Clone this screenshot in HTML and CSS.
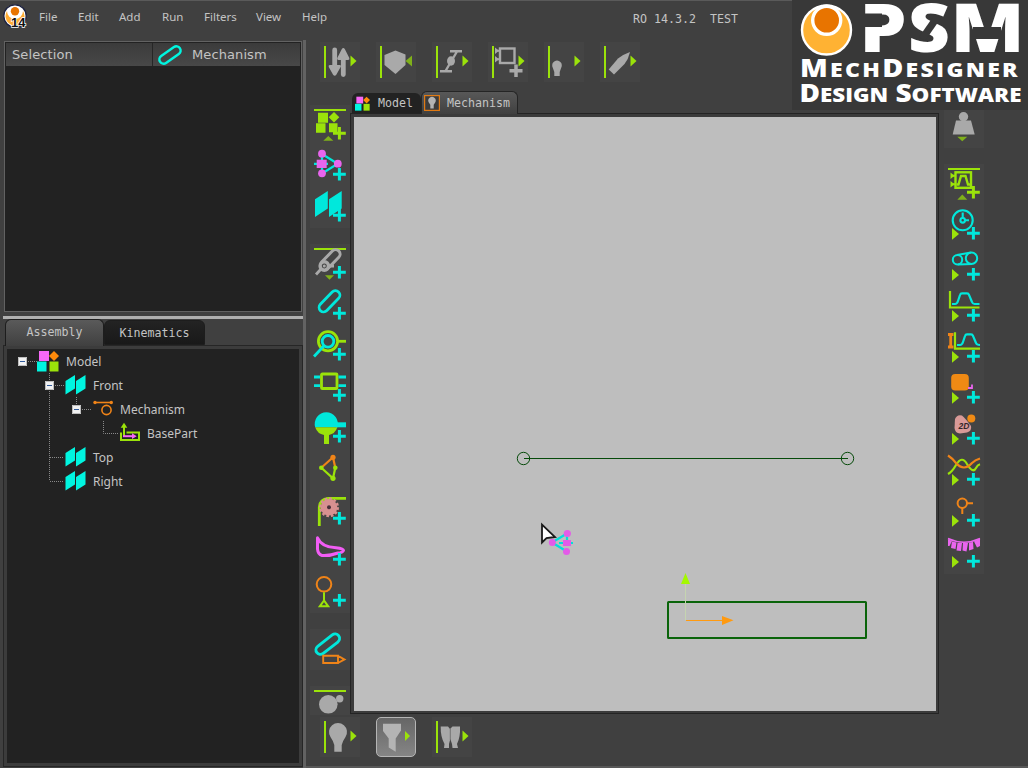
FILE: index.html
```html
<!DOCTYPE html>
<html lang="en">
<head>
<meta charset="utf-8">
<title>MechDesigner</title>
<link rel="stylesheet" href="styles.css">
</head>
<body>
<svg class="defs" width="0" height="0">
  <symbol id="plus" viewBox="0 0 40 40"><path d="M29.4 22V34.6M23 28.3H35.8" fill="none" stroke="currentColor" stroke-width="3"/></symbol>
  <symbol id="bar" viewBox="0 0 40 40"><path d="M4 4h2v32h-2z" fill="#9be30a"/></symbol>
  <symbol id="topline" viewBox="0 0 40 40"><path d="M4 4h32v2h-32z" fill="#9be30a"/></symbol>
  <symbol id="more" viewBox="0 0 40 40"><path d="M30.5 13.6V24.4L36.5 19z" fill="#9be30a"/></symbol>
  <symbol id="play" viewBox="0 0 40 40"><path d="M8 23V34.8L15 29z" fill="#9be30a"/></symbol>
  <symbol id="planes" viewBox="0 0 22 22"><path d="M1.500 7 11 1V14.500L1.500 20.500zM12 7 21.500 1V14.500L12 20.500z" fill="#00f5e0"/></symbol>
  <symbol id="blocks" viewBox="0 0 22 22"><path d="M2 1h10v10H2z" fill="#f768f7"/><path d="M17 1l5 5-5 5-5-5z" fill="#ff8a0a"/><path d="M0 11.5h9.5v10H0z" fill="#00f5e0"/><path d="M12.5 11.5h9v10h-9z" fill="#9be30a"/></symbol>
  <symbol id="minus" viewBox="0 0 9 9"><path d="M0 0h9v9H0z" fill="#f2f2f2"/><path d="M.5 .5h8v8h-8z" fill="none" stroke="#bdbdbd"/><path d="M2 4h5v1H2z" fill="#315b9c"/></symbol>
</svg>
<div class="app">
  <header class="menubar">
    <svg class="app-icon" viewBox="0 0 24 26"><circle cx="12" cy="12" r="11.2" fill="#fff" stroke="#1c2140" stroke-width="1.3"/><path d="M4 7a9.5 9.5 0 1 0 16 0a8 8 0 0 1-16 0" fill="#ffad33"/><circle cx="12" cy="7.2" r="4.2" fill="#e87400"/><text x="8" y="22.5" class="badge-num">14</text></svg>
    <nav class="menus"><span>File</span><span>Edit</span><span>Add</span><span>Run</span><span>Filters</span><span>View</span><span>Help</span></nav>
    <div class="version">RO 14.3.2&nbsp; TEST</div>
  </header>

  <aside class="side">
    <section class="selection">
      <div class="sel-head">
        <div class="sel-cell first">Selection</div>
        <div class="sel-cell"><svg class="sel-icon" viewBox="0 0 24 20"><rect x="0" y="5.800" width="24" height="8.400" rx="4.200" transform="rotate(-35 12 10)" fill="none" stroke="#00f5e0" stroke-width="2.500"/></svg><span>Mechanism</span></div>
      </div>
    </section>
    <div class="hsplit"></div>
    <div class="side-tabs"><div class="tab on">Assembly</div><div class="tab">Kinematics</div></div>
    <section class="tree-frame">
      <div class="tree">
        <svg class="wires" viewBox="7 349 140 150"><path d="M28 361.500H37M49.500 373V481M55 385.500H64M76.500 397V404M82 409.500H91M103.500 421V433.500H118M50 457.500H64M50 481.500H64" fill="none" stroke="#8a8a8a" stroke-dasharray="1 1"/></svg>
        <div class="row"><svg class="box"><use href="#minus"/></svg><svg class="ico"><use href="#blocks"/></svg><span>Model</span></div>
        <div class="row l1"><svg class="box"><use href="#minus"/></svg><svg class="ico"><use href="#planes"/></svg><span>Front</span></div>
        <div class="row l2"><svg class="box"><use href="#minus"/></svg><svg class="ico" viewBox="0 0 22 22"><g fill="none" stroke="#f08418" stroke-width="1.600"><path d="M4 4.500H20"/><circle cx="15.500" cy="12" r="4.600"/></g><circle cx="4" cy="4.500" r="1.700" fill="#f08418"/><circle cx="20.300" cy="4.500" r="1.700" fill="#f08418"/></svg><span>Mechanism</span></div>
        <div class="row l3"><i class="box"></i><svg class="ico" viewBox="0 0 22 22"><path d="M8.500 10.500H21V18H3V10.500" fill="none" stroke="#9be30a" stroke-width="2"/><path d="M6 14V4" stroke="#9be30a" stroke-width="2"/><path d="M2.700 5.800 6 .8 9.300 5.800z" fill="#9be30a"/><path d="M5 14.200H15" stroke="#f768f7" stroke-width="2"/><path d="M14 11.300 18.700 14.200 14 17.100z" fill="#f768f7"/></svg><span>BasePart</span></div>
        <div class="row l1"><i class="box"></i><svg class="ico"><use href="#planes"/></svg><span>Top</span></div>
        <div class="row l1"><i class="box"></i><svg class="ico"><use href="#planes"/></svg><span>Right</span></div>
      </div>
    </section>
  </aside>
  <div class="vsplit"></div>

  <main class="work">
    <div class="toolbar top">
      <svg class="btn"><use href="#bar"/><g fill="#a9a9a9"><path d="M12.300 8a2.400 2.400 0 0 1 4.800 0V23h2.600q2 .4 .8 2.200l-4.200 7.600q-1.600 2-3.200 0l-4.200-7.600q-1-1.800 .8-2.200h2.600z"/><path d="M20.900 32.500a2.400 2.400 0 0 0 4.800 0V18h2.500q2-.4 1-2.200l-4.300-8.500q-1.600-2.400-3.200 0l-4.300 8.500q-1 1.800 1 2.200h2.500z"/></g><use href="#more"/></svg>
      <svg class="btn"><use href="#bar"/><path d="M8.500 13 19.500 8.500 29.500 12.500V23L19.500 32 8.500 23z" fill="#a9a9a9"/><path d="M36 13.600V24.400L29.500 19z" fill="#7fb01a"/></svg>
      <svg class="btn"><use href="#bar"/><path d="M18 9.200H30M8 29.200H20M25 9.500 13.500 29" stroke="#a9a9a9" stroke-width="2.400" fill="none"/><ellipse cx="19" cy="19" rx="4" ry="4.700" fill="#a9a9a9"/><use href="#more"/></svg>
      <svg class="btn"><use href="#bar"/><g fill="none" stroke="#a9a9a9"><rect x="12" y="6.500" width="14.500" height="14.500" stroke-width="2.400"/><path d="M28 22.500V35M21.500 28.700H34.500" stroke-width="3.500"/><path d="M8.500 8.700H12M8.500 17.300H12" stroke-width="2"/></g><path d="M7 5.500 11 8.700 7 12zM7 14 11 17.300 7 20.500z" fill="#a9a9a9"/><use href="#more"/></svg>
      <svg class="btn"><use href="#bar"/><path d="M10.300 34V30L8.700 25.500A4.800 4.800 0 1 1 17.300 25.500L15.700 30V34z" fill="#a9a9a9"/><use href="#more"/></svg>
      <svg class="btn"><use href="#bar"/><path d="M8.700 27.500 18 16.500Q24 12 30 10 28.500 17 24.500 22L14 32.500z" fill="#a9a9a9"/><use href="#more"/></svg>
    </div>

    <div class="doc">
      <div class="toolbar left">
        <svg class="btn"><use href="#topline"/><path d="M8 7.700h10v10H8zM24 7l5.300 5.300L24 17.600 18.700 12.300zM6 18.300h9.500v9.500H6zM19 18.300h8.500v9H19z" fill="#9be30a"/><path d="M13.300 35.800 18.300 31 23.300 35.800z" fill="#7fb01a"/><use href="#plus" class="lime"/></svg>
        <svg class="btn"><path d="M4 17.800H18M12 8V27M12 8 27.700 17.800 12 27.500" fill="none" stroke="#00e8dc" stroke-width="2.200"/><g fill="#e965ee"><circle cx="12" cy="7.700" r="3.900"/><circle cx="12" cy="27.300" r="3.900"/><circle cx="27.800" cy="17.700" r="3.900"/><path d="M6.700 13.700h10v8.300h-10z"/></g><use href="#plus" class="cyan"/></svg>
        <svg class="btn sp1"><path d="M5 12.300 17.800 4V21.500L5 30zM19 12.300 31.700 4V21.500L19 30z" fill="#00e8dc"/><use href="#plus" class="cyan"/></svg>
        <svg class="btn"><use href="#topline"/><rect x="8.500" y="11" width="24" height="9" rx="4.500" transform="rotate(-46 20.500 15.700)" fill="none" stroke="#a9a9a9" stroke-width="3"/><circle cx="14.300" cy="22" r="4.200" fill="#454545" stroke="#a9a9a9" stroke-width="3.400"/><circle cx="14.300" cy="22" r="1.500" fill="#a9a9a9"/><path d="M11 25 6 30.500M18 22H24" stroke="#a9a9a9" stroke-width="2.800"/><path d="M15 31.300H24L19.500 35.800z" fill="#7fb01a"/><use href="#plus" class="cyan"/></svg>
        <svg class="btn"><rect x="6.500" y="11.800" width="26" height="9" rx="4.500" transform="rotate(-46 19.500 16.300)" fill="none" stroke="#00e8dc" stroke-width="2.800"/><use href="#plus" class="cyan"/></svg>
        <svg class="btn"><g fill="none" stroke-width="2.800"><circle cx="18" cy="15.300" r="9.600" stroke="#9be30a"/><path d="M28 15.300H36" stroke="#9be30a"/><circle cx="18" cy="15.300" r="5.800" stroke="#00e8dc"/><path d="M13.800 20 4 30.500" stroke="#00e8dc"/></g><use href="#plus" class="cyan"/></svg>
        <svg class="btn"><g fill="none" stroke-width="2.800"><rect x="11.500" y="7" width="15.500" height="14.500" rx=".8" stroke="#9be30a"/><path d="M4 10H10M4 18.700H10M28.500 10H36M28.500 18.700H36" stroke="#00e8dc"/></g><use href="#plus" class="cyan"/></svg>
        <svg class="btn"><path d="M5.200 19.300A11.600 11.600 0 1 1 27.400 19.300z" fill="#00e8dc"/><path d="M5.200 19.300H27.400Q25 26 19 27V36H14V27Q7.500 26 5.200 19.300z" fill="#9be30a"/><path d="M26 14.300h10v5H26z" fill="#00e8dc"/><use href="#plus" class="cyan"/></svg>
        <svg class="btn"><path d="M11.300 18.700 23 8.300 25.300 18.700" fill="none" stroke="#f08418" stroke-width="2.200"/><path d="M25.300 18.700 23 29.300 11.300 18.700" fill="none" stroke="#9be30a" stroke-width="2.200"/><circle cx="23" cy="8.300" r="2.600" fill="#f08418"/><g fill="#9be30a"><circle cx="11.300" cy="18.700" r="2.300"/><circle cx="25.300" cy="18.700" r="2.300"/><circle cx="23" cy="29.300" r="2.600"/></g></svg>
        <svg class="btn"><path d="M9.300 36V17Q10 9 18 8.300H36" fill="none" stroke="#9be30a" stroke-width="2.800"/><circle cx="19" cy="17.300" r="8.300" fill="#d79090"/><circle cx="19" cy="17.300" r="8.800" fill="none" stroke="#d79090" stroke-width="2.400" stroke-dasharray="2.600 2"/><circle cx="19" cy="17.300" r="2" fill="#49303a"/><use href="#plus" class="cyan"/></svg>
        <svg class="btn"><path d="M7.500 6.800Q11.500 16 26 16.800 33.500 17.500 33.500 19.500 33 21.500 28 22 20 25 12 24.500 8 23.500 7.500 18z" fill="none" stroke="#f25df5" stroke-width="3" stroke-linejoin="round"/><use href="#plus" class="cyan"/></svg>
        <svg class="btn sp2"><circle cx="14" cy="12.300" r="7.300" fill="none" stroke="#f08418" stroke-width="2"/><path d="M14 20.300V28M14 28.500 9.800 34.300H18.200z" fill="none" stroke="#9be30a" stroke-width="2"/><use href="#plus" class="cyan"/></svg>
        <svg class="btn sp2"><rect x="4" y="10.700" width="27.500" height="9" rx="4.500" transform="rotate(-38 17.700 15.200)" fill="none" stroke="#00e8dc" stroke-width="2.900"/><path d="M28 26.800H13.200V34H28zM28 26.800 34.500 30.400 28 34" fill="none" stroke="#f08418" stroke-width="1.900"/></svg>
        <svg class="btn cut" viewBox="0 0 40 28"><path d="M4 4h32v2H4z" fill="#9be30a"/><circle cx="18.300" cy="18.300" r="9.300" fill="#a9a9a9"/><circle cx="29.700" cy="12.700" r="3.700" fill="#a9a9a9"/></svg>
      </div>

      <div class="view">
        <div class="doc-tabs">
          <div class="dtab"><svg class="dico"><use href="#blocks"/></svg>Model</div>
          <div class="dtab on"><svg class="dico" viewBox="0 0 16 16"><rect x=".6" y=".6" width="14.800" height="14.800" fill="#3c3c3c" stroke="#e07a14" stroke-width="1.200"/><path d="M6.300 13.500V9.800L4.800 7.500A3.700 3.700 0 1 1 11.200 7.500L9.700 9.800V13.500z" fill="#b4b4b4"/></svg>Mechanism</div>
        </div>
        <div class="canvas-frame">
        <svg class="canvas" viewBox="354 117 582 594">
          <g fill="none" stroke="#064a0a" stroke-width="1"><path d="M524 458.500H848"/><circle cx="523.500" cy="458.500" r="6.200"/><circle cx="847.500" cy="458.500" r="6.200"/></g>
          <rect x="668" y="602" width="198" height="36" rx=".5" fill="none" stroke="#0a640a" stroke-width="2"/>
          <path d="M685.500 620V584" stroke="#c5d4b0"/><path d="M681 584 685.500 573 690 584z" fill="#a4f800"/>
          <path d="M686 620.500H724" stroke="#ff9a10"/><path d="M722 616V625L733.500 620.300z" fill="#ff9a10"/>
          <path d="M552 542.500 567 533.500V543M552 542.500 566 551M559 543H573" fill="none" stroke="#00e0dc" stroke-width="2.200"/>
          <g fill="#e35be8"><circle cx="567.300" cy="533.500" r="3.600"/><circle cx="552.300" cy="542.500" r="3.500"/><circle cx="566.500" cy="551.500" r="3.500"/><path d="M563 540h8v6h-8z"/></g>
          <path d="M542 524.500V542.500L546.500 538 555 537z" fill="#fff" stroke="#1a1a1a" stroke-width="1.800"/>
        </svg>
        </div>
      </div>

      <div class="toolbar right">
        <svg class="btn sp3"><circle cx="19.500" cy="9.700" r="4.700" fill="#a9a9a9"/><path d="M12 13.500H27L30.700 27.500H8.700z" fill="#a9a9a9"/><path d="M13.300 29.700H23.300L18.300 34.200z" fill="#7fb01a"/></svg>
        <svg class="btn"><use href="#topline"/><g fill="none" stroke="#9be30a"><rect x="11.500" y="8.300" width="15.500" height="15.500" stroke-width="2.400"/><path d="M12.500 20.500H14.500L17 12H21.500L24 20.500H26.500" stroke-width="2.400"/><path d="M8 11.700H11M8 20.200H11" stroke-width="2"/></g><path d="M6.500 8.500 10.500 11.700 6.500 15zM6.500 17 10.500 20.200 6.500 23.500z" fill="#9be30a"/><path d="M13.300 35.800 18.300 30.500 23.300 35.800z" fill="#7fb01a"/><use href="#plus" class="lime"/></svg>
        <svg class="btn"><g fill="none" stroke="#00e8dc" stroke-width="2.100"><circle cx="18.700" cy="15.300" r="10"/><circle cx="18.700" cy="15.300" r="2.300"/><path d="M18.700 7.500V13M21 15.300H25"/></g><use href="#play"/><use href="#plus" class="cyan"/></svg>
        <svg class="btn"><g fill="none" stroke="#00e8dc" stroke-width="2"><circle cx="13.500" cy="13.700" r="4.700"/><circle cx="27.500" cy="12.200" r="5.700"/><path d="M13 8.900 27 6.500M14 18.400 28 17.900"/></g><use href="#play"/><use href="#plus" class="cyan"/></svg>
        <svg class="btn"><path d="M6 4V20.500H35.500" fill="none" stroke="#9be30a" stroke-width="2.200"/><path d="M8 17H11Q13 17 14 14L16 8Q16.500 6.300 18 6.300H23Q24.500 6.300 25 8L28 15Q28.700 17 30.500 17H35.500" fill="none" stroke="#00e8dc" stroke-width="2.200"/><use href="#play"/><use href="#plus" class="cyan"/></svg>
        <svg class="btn"><path d="M4 6.500H9.500M4 19H9.500M6.700 6V20" stroke="#f08418" stroke-width="2.800"/><path d="M11 4.300V20.700H36" fill="none" stroke="#9be30a" stroke-width="2.200"/><path d="M13 17H16Q18 17 19 14L21 8Q21.500 6.300 23 6.300H27Q28.500 6.300 29 8L32 15Q32.700 17 36 17" fill="none" stroke="#00e8dc" stroke-width="2.200"/><use href="#play"/><use href="#plus" class="cyan"/></svg>
        <svg class="btn"><rect x="7.200" y="5" width="17.600" height="16.500" rx="4" fill="#f08a14"/><path d="M28 15.500V19H24" fill="none" stroke="#e965ee" stroke-width="1.800"/><use href="#play"/><use href="#plus" class="cyan"/></svg>
        <svg class="btn"><path d="M11 9Q13 4 18 5.500 22 9 27 16 28 21 23 22.500L16 23.500Q11 23 10.500 18z" fill="#d99a98"/><circle cx="27.300" cy="8.500" r="4" fill="#f08a14"/><text x="14.500" y="19" class="two-d">2D</text><use href="#play"/><use href="#plus" class="cyan"/></svg>
        <svg class="btn"><g fill="none" stroke-width="2.200"><path d="M4 23Q8 21 12 14 18 4 23 13 29 23 32 17 33.500 14 36 13.300" stroke="#9be30a"/><path d="M4 4.500Q8 7 12 12 20 21 28 12 31 9 36 7.500" stroke="#f08418"/></g><use href="#play"/><use href="#plus" class="cyan"/></svg>
        <svg class="btn"><g fill="none" stroke="#f08418" stroke-width="2"><circle cx="18.300" cy="11.300" r="4.700"/><path d="M23 11.300H29M18.300 16V22"/></g><use href="#play"/><use href="#plus" class="cyan"/></svg>
        <svg class="btn"><path d="M4 5.500Q20 13 36 5.500" fill="none" stroke="#e965ee" stroke-width="1.400"/><path d="M4 6 8 8 5.500 13H4zM8 8.500 12.500 9.500 11.500 16 7 15zM13.500 10H18L17 18 12.500 17.500zM19 10H24L22.500 18.500 18.500 17.500zM25 9.500 29 9 29.500 16 25 17.500zM30 8.500 36 5.500V13L33 14.500z" fill="#e965ee"/><use href="#play"/><use href="#plus" class="cyan"/></svg>
      </div>
    </div>

    <div class="toolbar bottom">
      <svg class="btn"><use href="#bar"/><path d="M14.300 34.700V28Q13 23.500 10.500 20A9 9 0 1 1 25.500 20Q23 23.500 21.700 28V34.700z" fill="#a9a9a9"/><use href="#more"/></svg>
      <svg class="btn sel" viewBox="1 1 38 38"><path d="M7 6.700H25V13.500L19.700 21.500V34.700L12.700 30.500V21.500L7 14z" fill="#b4b4b4"/><path d="M29 14V24L34 19z" fill="#9be30a"/></svg>
      <svg class="btn"><use href="#bar"/><path d="M8.700 9.500H16L18 12 20.500 9.500H28Q28.500 20 25 27L26 31H20.500L20 27 18.300 22 17 27V31H12L12.500 27Q8.500 20 8.700 9.500z" fill="#a9a9a9"/><path d="M18.300 12V23" stroke="#666" stroke-width=".8"/><use href="#more"/></svg>
    </div>
  </main>

  <svg class="brand" viewBox="792 0 236 110">
    <rect x="792" y="0" width="236" height="110" fill="#383838"/>
    <circle cx="826.500" cy="30" r="24.500" fill="#ffb233" stroke="#fff" stroke-width="2.400"/>
    <circle cx="826.700" cy="20.300" r="14" fill="#e87400" stroke="#fff" stroke-width="3.400"/>
    <g class="psm">
      <text x="859.500" y="52.300" textLength="47" lengthAdjust="spacingAndGlyphs">P</text>
      <text x="908" y="51.500" textLength="42" lengthAdjust="spacingAndGlyphs">S</text>
      <text x="950.500" y="52.300" textLength="74" lengthAdjust="spacingAndGlyphs">M</text>
    </g>
    <g fill="#383838"><path d="M862 13.500H882V27H862z"/><path d="M919 37 935 14 941 18 925 41z"/><path d="M973 27H1001V39H973z"/></g>
    <text x="800" y="77.300" textLength="220" lengthAdjust="spacingAndGlyphs" class="cap wide">M<tspan class="small">ECH</tspan>D<tspan class="small">ESIGNER</tspan></text>
    <text x="799.500" y="102.300" textLength="222" lengthAdjust="spacingAndGlyphs" class="cap">D<tspan class="small">ESIGN</tspan> S<tspan class="small">OFTWARE</tspan></text>
  </svg>
</div>
</body>
</html>
```
FILE: styles.css
```css
* { box-sizing: border-box; }
body { margin: 0; background: #404040; }
.defs { position: absolute; }
.app {
  position: relative;
  width: 1028px;
  height: 768px;
  overflow: hidden;
  display: grid;
  grid-template-columns: 303px 3px 1fr;
  grid-template-rows: 40px 1fr;
  background: #404040;
  color: #c4c4c4;
  font-family: "Noto Sans", sans-serif;
  font-size: 12px;
}

/* Menu bar */
.menubar {
  grid-column: 1 / -1;
  display: flex;
  align-items: flex-start;
  border-top: 1px solid #5a5a5a;
}
.app-icon { width: 24px; height: 26px; margin: 3px 0 0 3px; }
.badge-num { font: bold 13px "Liberation Sans", sans-serif; fill: #111; stroke: #fff; stroke-width: 1.4px; paint-order: stroke; }
.menus {
  display: grid;
  grid-template-columns: 39px 41px 43px 42px 52px 46px 40px;
  margin: 7px 0 0 12px;
  font-size: 11.5px;
  line-height: 17px;
}
.version {
  margin: 10px 0 0 291px;
  font: 11.63px/17px "DejaVu Sans Mono", monospace;
  white-space: pre;
}

/* Left side */
.side { display: flex; flex-direction: column; padding: 1px 0 1px 4px; }
.selection {
  width: 298px;
  height: 271px;
  border: 1px solid #626262;
  background: #222;
  padding: 1px;
}
.sel-head { display: flex; height: 23px; background: linear-gradient(#3b3b3b, #484848); font: 13px/23px "DejaVu Sans", sans-serif; letter-spacing: .1px; }
.sel-cell { display: flex; flex: 1; align-items: center; }
.sel-cell.first { flex: 0 0 147px; padding-left: 6px; border-right: 1px solid #262626; }
.sel-icon { width: 24px; height: 20px; margin: 0 10px 0 5px; overflow: visible; }
.hsplit { height: 3px; margin: 4px 0 0 -1px; background: #b0b0b0; }
.side-tabs {
  display: flex;
  align-items: flex-end;
  height: 26px;
  padding-left: 1px;
  font: 11.63px/24px "DejaVu Sans Mono", monospace;
}
.tab { width: 101px; height: 25px; text-align: center; border-radius: 6px 6px 0 0; background: linear-gradient(#232323, #191919); border: 1px solid #1d1d1d; }
.tab.on { width: 99px; height: 27px; margin-bottom: -1px; background: linear-gradient(#5a5a5a, #404040); border-bottom: 0; z-index: 1; }
.tree-frame { flex: 1; width: 300px; margin-left: -1px; padding: 3px; border: 1px solid #262626; background: #3c3c3c; }
.tree { position: relative; height: 100%; background: #222; }
.wires { position: absolute; left: 0; top: 0; width: 140px; height: 150px; }
.row { position: relative; display: flex; align-items: center; height: 24px; padding-left: 11px; font-size: 12px; }
.row.l1 { padding-left: 38px; }
.row.l2 { padding-left: 65px; }
.row.l3 { padding-left: 92px; }
.box { width: 9px; height: 9px; margin-right: 10px; }
.ico { width: 22px; height: 22px; margin-right: 7px; }
.vsplit { background: #626262; }

/* Work area */
.work { display: flex; flex-direction: column; border-bottom: 2px solid #585858; }
.toolbar { display: flex; }
.btn { display: block; flex: none; width: 40px; height: 40px; background: #444; }
.cyan { color: #00e8dc; }
.lime { color: #9be30a; }
.top, .bottom { gap: 16px; padding-left: 14px; }
.top { height: 51px; padding-top: 2px; }
.doc { display: flex; height: 624px; }
.left, .right { flex-direction: column; gap: 1px; }
.left .btn, .right .btn { box-shadow: 0 1px #444; }
.left { width: 44px; padding: 14px 0 0 4px; }
.left .sp1, .left .sp2 { margin-bottom: 16px; }
.left .btn.cut { height: 28px; }
.view { width: 590px; display: flex; flex-direction: column; }
.doc-tabs { display: flex; height: 22px; align-items: flex-end; padding-left: 2px; font: 11.63px/21px "DejaVu Sans Mono", monospace; }
.dtab { display: flex; align-items: center; width: 69px; height: 20px; padding-left: 3px; border-radius: 6px 6px 0 0; background: #222; }
.dtab.on { width: 97px; height: 23px; margin-bottom: -1px; padding-left: 2px; background: linear-gradient(#585858, #404040); border: 1px solid #252525; border-bottom: 0; z-index: 1; }
.dtab .dico { width: 15px; height: 15px; margin-right: 8px; }
.dtab.on .dico { width: 16px; height: 16px; margin-right: 7px; }
.canvas-frame { width: 589px; height: 601px; border: 1px solid #242424; padding: 3px 2px 2px 3px; background: #3b3b3b; }
.canvas { display: block; width: 582px; height: 594px; background: #bebebe; }
.right { padding: 16px 0 0 4px; }
.right .sp3 { margin-bottom: 16px; }
.bottom { padding-top: 2px; }
.btn.sel { border: 1px solid #b5b5b5; border-radius: 5px; background: linear-gradient(#666, #858585); }

/* Brand block overlapping the toolbars */
.brand { position: absolute; right: 0; top: 0; width: 236px; height: 110px; }
.psm { font: 800 67px "Open Sans", sans-serif; fill: #fff; }
.cap { font: 800 25px "Open Sans", "Noto Sans", sans-serif; fill: #fff; }
.wide { letter-spacing: 2px; }
.small { font-size: 20px; }
.two-d { font: italic bold 8.5px "Liberation Sans", sans-serif; fill: #33262a; }
```
